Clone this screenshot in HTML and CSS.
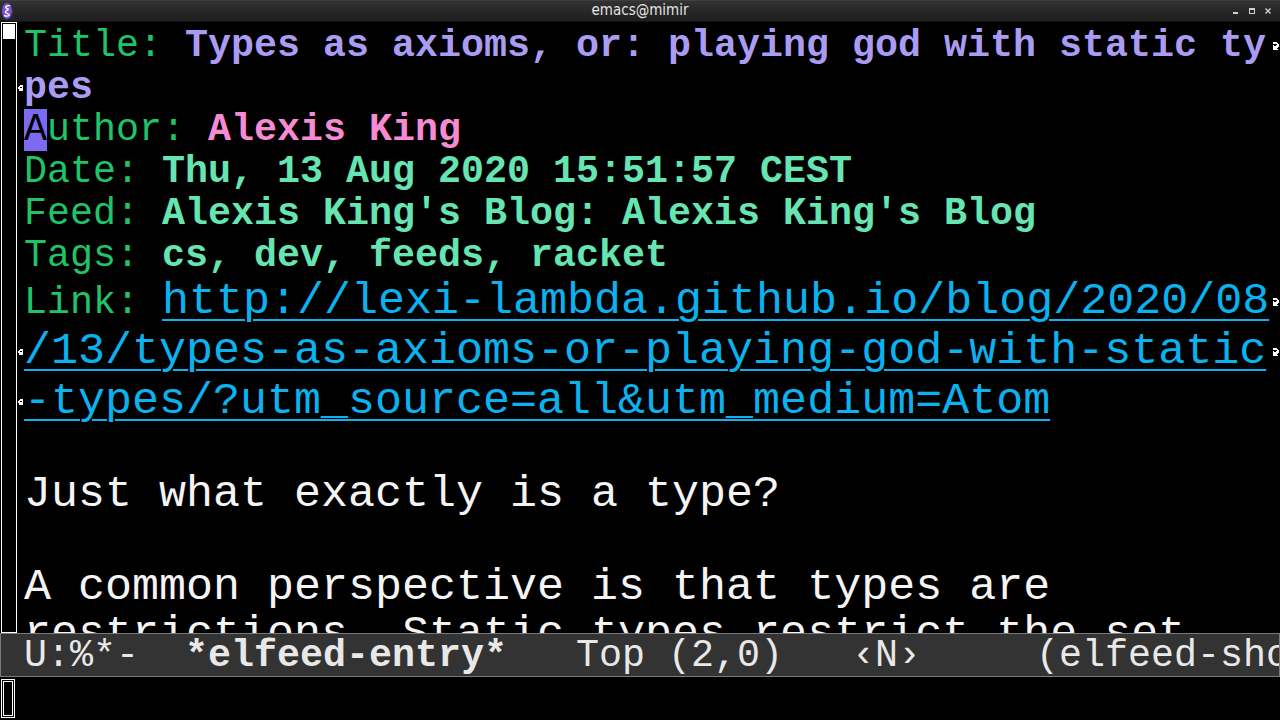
FILE: index.html
```html
<!DOCTYPE html>
<html lang="en">
<head>
<meta charset="utf-8">
<title>emacs@mimir</title>
<link rel="stylesheet" href="styles.css">
</head>
<body>
<div class="frame">
  <header class="titlebar">
    <div class="tb-side tb-left">
      <svg class="app-icon" width="12" height="18" viewBox="0 0 12 18">
        <ellipse cx="6" cy="9" rx="5.2" ry="8.2" fill="#7b58c4" stroke="#4b2c8c" stroke-width="0.8"/>
        <path d="M8.6 3.6 C4.6 3.4 3.2 5.6 6.4 6.6 C9.2 7.4 4.2 8.6 4.4 10.2 C4.6 11.8 8.6 11.6 8.2 13 C7.6 14.4 4.8 14.4 3.6 13.6" stroke="#fff" stroke-width="1.3" fill="none" stroke-linecap="round"/>
      </svg>
    </div>
    <div class="tb-title">emacs@mimir</div>
    <div class="tb-side tb-right">
      <svg class="wm-btn" width="8" height="8" viewBox="0 0 8 8"><rect x="1" y="5" width="5" height="2" fill="#d0d0d0"/></svg>
      <svg class="wm-btn" width="8" height="8" viewBox="0 0 8 8"><rect x="1.5" y="1.5" width="5" height="5" fill="none" stroke="#d0d0d0"/><rect x="1" y="1" width="6" height="2" fill="#d0d0d0"/></svg>
      <svg class="wm-btn" width="8" height="8" viewBox="0 0 8 8"><path d="M1.5 1.5 L6.5 6.5 M6.5 1.5 L1.5 6.5" stroke="#d0d0d0" stroke-width="1.4"/></svg>
    </div>
  </header>

  <div class="window">
    <div class="scrollbar"><div class="thumb"></div></div>
    <div class="buffer">
      <div class="row hl">
        <span class="lf"></span>
        <div class="txt"><span class="lbl">Title: </span><b class="v-title">Types as axioms, or: playing god with static ty</b></div>
        <span class="rf"><svg class="bmp" width="8" height="8" viewBox="0 0 8 8"><path d="M2 0h4v1H2zM2 1h5v1H2zM6 2h2v1H6zM2 3h1v1H2zM5 3h3v1H5zM2 4h6v1H2zM2 5h5v1H2zM2 6h4v1H2zM2 7h5v1H2z" fill="#fff"/></svg></span>
      </div>
      <div class="row hl">
        <span class="lf"><svg class="bmp" width="8" height="8" viewBox="0 0 8 8"><path d="M2 0h4v1H2zM1 1h5v1H1zM0 2h2v1H0zM0 3h3v1H0zM5 3h1v1H5zM0 4h6v1H0zM1 5h5v1H1zM2 6h4v1H2zM1 7h5v1H1z" fill="#fff"/></svg></span>
        <div class="txt"><b class="v-title">pes</b></div>
        <span class="rf"></span>
      </div>
      <div class="row hl">
        <span class="lf"></span>
        <div class="txt"><span class="cursor">A</span><span class="lbl">uthor: </span><b class="v-author">Alexis King</b></div>
        <span class="rf"></span>
      </div>
      <div class="row hl">
        <span class="lf"></span>
        <div class="txt"><span class="lbl">Date: </span><b class="v-meta">Thu, 13 Aug 2020 15:51:57 CEST</b></div>
        <span class="rf"></span>
      </div>
      <div class="row hl">
        <span class="lf"></span>
        <div class="txt"><span class="lbl">Feed: </span><b class="v-meta">Alexis King's Blog: Alexis King's Blog</b></div>
        <span class="rf"></span>
      </div>
      <div class="row hl">
        <span class="lf"></span>
        <div class="txt"><span class="lbl">Tags: </span><b class="v-meta">cs, dev, feeds, racket</b></div>
        <span class="rf"></span>
      </div>
      <div class="row ul">
        <span class="lf"></span>
        <div class="txt"><span class="lbl lbl-small">Link: </span><span class="link">http://lexi-lambda.github.io/blog/2020/08</span></div>
        <span class="rf"><svg class="bmp" width="8" height="8" viewBox="0 0 8 8"><path d="M2 0h4v1H2zM2 1h5v1H2zM6 2h2v1H6zM2 3h1v1H2zM5 3h3v1H5zM2 4h6v1H2zM2 5h5v1H2zM2 6h4v1H2zM2 7h5v1H2z" fill="#fff"/></svg></span>
      </div>
      <div class="row ul">
        <span class="lf"><svg class="bmp" width="8" height="8" viewBox="0 0 8 8"><path d="M2 0h4v1H2zM1 1h5v1H1zM0 2h2v1H0zM0 3h3v1H0zM5 3h1v1H5zM0 4h6v1H0zM1 5h5v1H1zM2 6h4v1H2zM1 7h5v1H1z" fill="#fff"/></svg></span>
        <div class="txt"><span class="link">/13/types-as-axioms-or-playing-god-with-static</span></div>
        <span class="rf"><svg class="bmp" width="8" height="8" viewBox="0 0 8 8"><path d="M2 0h4v1H2zM2 1h5v1H2zM6 2h2v1H6zM2 3h1v1H2zM5 3h3v1H5zM2 4h6v1H2zM2 5h5v1H2zM2 6h4v1H2zM2 7h5v1H2z" fill="#fff"/></svg></span>
      </div>
      <div class="row ul">
        <span class="lf"><svg class="bmp" width="8" height="8" viewBox="0 0 8 8"><path d="M2 0h4v1H2zM1 1h5v1H1zM0 2h2v1H0zM0 3h3v1H0zM5 3h1v1H5zM0 4h6v1H0zM1 5h5v1H1zM2 6h4v1H2zM1 7h5v1H1z" fill="#fff"/></svg></span>
        <div class="txt"><span class="link">-types/?utm_source=all&amp;utm_medium=Atom</span></div>
        <span class="rf"></span>
      </div>
      <div class="row gap"></div>
      <div class="row bl">
        <span class="lf"></span>
        <div class="txt">Just what exactly is a type?</div>
        <span class="rf"></span>
      </div>
      <div class="row bl"></div>
      <div class="row bl">
        <span class="lf"></span>
        <div class="txt">A common perspective is that types are</div>
        <span class="rf"></span>
      </div>
      <div class="row bl">
        <span class="lf"></span>
        <div class="txt">restrictions. Static types restrict the set</div>
        <span class="rf"></span>
      </div>
    </div>
  </div>

  <div class="modeline">U:%*-  <b>*elfeed-entry*</b>   Top (2,0)   ‹N›     (elfeed-show-mode)</div>

  <div class="minibuffer">
    <div class="mini-scroll"><div class="mini-thumb"></div></div>
  </div>
</div>
</body>
</html>
```

FILE: styles.css
```css
* {
  box-sizing: border-box;
  margin: 0;
  padding: 0;
}

html,
body {
  width: 1280px;
  height: 720px;
  overflow: hidden;
  background: #000;
}

body {
  font-family: "Liberation Mono", "DejaVu Sans Mono", monospace;
  color: #f4f4f4;
}

.frame {
  display: flex;
  flex-direction: column;
  width: 1280px;
  height: 720px;
}

/* ---------- title bar ---------- */
.titlebar {
  height: 22px;
  flex: none;
  display: flex;
  align-items: center;
  background: linear-gradient(#4a4a4a 0, #333 1px, #2a2a2a 8px, #1f1f1f 100%);
  border-bottom: 1px solid #111;
}

.tb-side {
  width: 90px;
  height: 100%;
  display: flex;
  align-items: center;
}

.tb-left {
  padding-left: 1px;
}

.tb-right {
  justify-content: flex-end;
  gap: 8px;
  padding-right: 8px;
}

.tb-title {
  flex: 1;
  text-align: center;
  font-family: "DejaVu Sans", "Liberation Sans", sans-serif;
  font-stretch: condensed;
  font-size: 15px;
  color: #e2e2e2;
  line-height: 21px;
}

.wm-btn {
  display: block;
}

/* ---------- main window ---------- */
.window {
  display: flex;
  height: 611px;
  flex: none;
}

.scrollbar {
  width: 16px;
  height: 611px;
  margin-left: 1px;
  border: 1px solid #fff;
  flex: none;
}

.thumb {
  margin: 1px;
  height: 15px;
  background: #fff;
}

.buffer {
  width: 1263px;
  padding-top: 3px;
  overflow: hidden;
  display: flex;
  flex-direction: column;
}

.row {
  display: flex;
  flex: none;
}

.hl {
  height: 42px;
  line-height: 42px;
  font-size: 38.33px;
}

.ul {
  height: 50px;
  line-height: 50px;
  font-size: 45px;
}

.bl {
  height: 46.5px;
  line-height: 46.5px;
  font-size: 45px;
}

.gap {
  height: 45px;
}

.lf {
  width: 7px;
  flex: none;
  display: flex;
  align-items: center;
  padding-left: 1px;
}

.rf {
  width: 10px;
  flex: none;
  display: flex;
  align-items: center;
  padding-left: 1px;
}

.bmp {
  display: block;
  shape-rendering: crispEdges;
}

.txt {
  width: 1246px;
  flex: none;
  white-space: pre;
  overflow: hidden;
}

.lbl {
  color: #1fc469;
}

.lbl-small {
  font-size: 38.33px;
  line-height: 38px;
}

.v-title {
  color: #ab9cf3;
}

.v-author {
  color: #f78bd3;
}

.v-meta {
  color: #66e5b3;
}

.cursor {
  background: #7d6af0;
  color: #000;
}

.link {
  color: #0ab3ef;
  text-decoration: underline;
  text-decoration-thickness: 2px;
  text-underline-offset: 6px;
}

/* ---------- mode line ---------- */
.modeline {
  height: 44px;
  flex: none;
  border: 1px solid #7a7a7a;
  background: #333;
  color: #e8e8e8;
  font-size: 38.33px;
  line-height: 40px;
  padding: 2px 0 0 23px;
  white-space: pre;
  overflow: hidden;
}

/* ---------- minibuffer ---------- */
.minibuffer {
  height: 43px;
  flex: none;
  display: flex;
}

.mini-scroll {
  width: 14px;
  margin: 2px 0 2px 1px;
  border: 1px solid #fff;
  padding: 1px;
}

.mini-thumb {
  height: 100%;
  border: 1px solid #fff;
}
```
